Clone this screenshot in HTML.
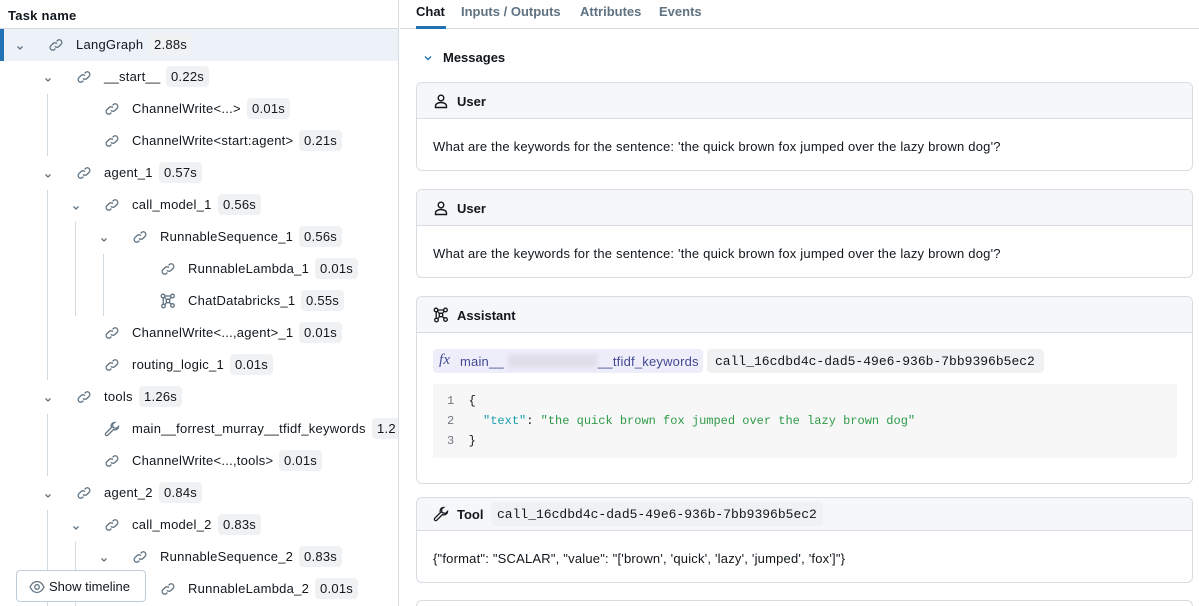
<!DOCTYPE html>
<html style="width:1199px;height:606px;overflow:hidden"><head><meta charset="utf-8"><style>
*{box-sizing:border-box;margin:0;padding:0}
body{width:1199px;height:606px;overflow:hidden;font-family:"Liberation Sans",Arial,sans-serif;font-size:13px;color:#11171c;background:#fff;position:relative}
.left{position:absolute;left:0;top:0;width:399px;height:606px;border-right:1px solid #d8dde3;overflow:hidden;letter-spacing:0.25px}
.hdr{height:29px;border-bottom:1px solid #d1d9e1;padding:8px 0 0 8px;font-weight:bold;font-size:13px}
.row{position:absolute;left:0;height:32px;width:399px;white-space:nowrap}
.row .t{position:absolute;top:8px}
.row .b{position:absolute;top:5px;background:#f0f1f3;border-radius:4px;padding:3px 5px;font-size:13px}
.chev{position:absolute;top:11px}
.ic{position:absolute;top:8px}
.vl{position:absolute;width:1px;background:#d1d9e1}
.right{position:absolute;left:400px;top:0;right:0;height:606px;overflow:hidden}
.tabs{height:29px;border-bottom:1px solid #d1d9e1;position:relative}
.tab{position:absolute;top:4px;font-weight:bold;color:#5f7281}
.card{position:absolute;left:16px;width:777px;border:1px solid #d8dde3;border-radius:6px;overflow:hidden;background:#fff}
.ch{height:36px;background:#f6f7f9;border-bottom:1px solid #d8dde3;position:relative;font-weight:bold}
.ch span{position:absolute;left:40px;top:11px}
.ch svg{position:absolute;left:16px;top:10px}
.cb{position:relative;letter-spacing:0.2px}
.mono{font-family:"Liberation Mono",monospace;letter-spacing:0}
</style></head><body>
<div class="left">
<div class="hdr">Task name</div>
<div style="position:absolute;left:0;top:29px;width:399px;height:32px;background:#edf2f9"></div>
<div style="position:absolute;left:0;top:29px;width:4px;height:32px;background:#2272b4"></div>
<div class="vl" style="left:47px;top:94px;height:62px"></div>
<div class="vl" style="left:47px;top:190px;height:190px"></div>
<div class="vl" style="left:75px;top:222px;height:94px"></div>
<div class="vl" style="left:103px;top:254px;height:62px"></div>
<div class="vl" style="left:47px;top:414px;height:62px"></div>
<div class="vl" style="left:47px;top:510px;height:96px"></div>
<div class="vl" style="left:75px;top:542px;height:64px"></div>
<div id="rows"></div>
<div style="position:absolute;left:16px;top:570px;width:130px;height:32px;border:1px solid #c0cdd8;border-radius:4px;background:#fff;letter-spacing:0">
<svg style="position:absolute;left:12px;top:9px" width="16" height="14" viewBox="0 0 16 14" fill="none" stroke="#5f7281" stroke-width="1.3"><path d="M1 7C3 3 5.5 1.5 8 1.5S13 3 15 7C13 11 10.5 12.5 8 12.5S3 11 1 7Z"/><circle cx="8" cy="7" r="2.3"/></svg>
<span style="position:absolute;left:32px;top:8px">Show timeline</span></div>
</div>
<div class="right">
<div class="tabs">
<span class="tab" style="left:16px;color:#11171c">Chat</span>
<div style="position:absolute;left:16px;top:26px;width:30px;height:3px;background:#2272b4"></div>
<span class="tab" style="left:61px">Inputs / Outputs</span>
<span class="tab" style="left:180px">Attributes</span>
<span class="tab" style="left:259px">Events</span>
</div>
<svg style="position:absolute;left:24px;top:55px" width="8" height="6" viewBox="0 0 8 6"><path d="M1 1.5L4 4.5L7 1.5" fill="none" stroke="#2272b4" stroke-width="1.4"/></svg>
<span style="position:absolute;left:43px;top:50px;font-weight:bold">Messages</span>

<div class="card" style="top:82px;height:89px"><div class="ch"><svg width="16" height="16" viewBox="0 0 16 16" fill="none" stroke="#11171c" stroke-width="1.4"><circle cx="8" cy="5" r="2.8"/><path d="M2.5 14.5V13c0-2 2.5-3.5 5.5-3.5s5.5 1.5 5.5 3.5v1.5Z"/></svg><span>User</span></div>
<div class="cb"><span style="position:absolute;left:16px;top:20px">What are the keywords for the sentence: 'the quick brown fox jumped over the lazy brown dog'?</span></div></div>

<div class="card" style="top:189px;height:89px"><div class="ch"><svg width="16" height="16" viewBox="0 0 16 16" fill="none" stroke="#11171c" stroke-width="1.4"><circle cx="8" cy="5" r="2.8"/><path d="M2.5 14.5V13c0-2 2.5-3.5 5.5-3.5s5.5 1.5 5.5 3.5v1.5Z"/></svg><span>User</span></div>
<div class="cb"><span style="position:absolute;left:16px;top:20px">What are the keywords for the sentence: 'the quick brown fox jumped over the lazy brown dog'?</span></div></div>

<div class="card" style="top:296px;height:188px"><div class="ch"><svg width="16" height="16" viewBox="0 0 16 16" fill="none" stroke="#11171c" stroke-width="1.3"><circle cx="3" cy="3" r="1.8"/><circle cx="12.5" cy="3" r="1.8"/><circle cx="3.5" cy="13" r="1.8"/><circle cx="12.5" cy="12.5" r="1.8"/><circle cx="8" cy="8" r="1.8"/><path d="M4.5 4.3L6.7 6.7M11 4.3L9.3 6.7M5 11.5L6.7 9.3M11 11.2L9.3 9.3M4.8 3H10.7M3.2 4.8V11.2"/></svg><span>Assistant</span></div>
<div class="cb">
<div style="position:absolute;left:16px;top:16px;width:270px;height:24px;background:#eeedfa;border-radius:4px;color:#434a93">
<i style="position:absolute;left:6px;top:3px;font-family:'Liberation Serif',serif;font-size:15px">fx</i>
<span style="position:absolute;left:27px;top:5px">main__</span>
<div style="position:absolute;left:75px;top:5px;width:90px;height:14px;background:#e0dfea;filter:blur(2px)"></div>
<span style="position:absolute;left:165px;top:5px">__tfidf_keywords</span></div>
<div class="mono" style="position:absolute;left:290px;top:16px;width:337px;height:24px;background:#f0f1f3;border-radius:4px;padding:5px 8px;font-size:13px">call_16cdbd4c-dad5-49e6-936b-7bb9396b5ec2</div>
<div class="mono" style="position:absolute;left:16px;top:51px;width:744px;height:74px;background:#f7f7f7;font-size:12px;line-height:20px;padding:7px 0 0 14px;white-space:pre;color:#11171c"><span style="color:#6f7780">1</span>  {
<span style="color:#6f7780">2</span>    <span style="color:#1a9fb0">"text"</span>: <span style="color:#2f9a48">"the quick brown fox jumped over the lazy brown dog"</span>
<span style="color:#6f7780">3</span>  }</div>
</div></div>

<div class="card" style="top:497px;height:86px"><div class="ch" style="height:33px"><svg width="16" height="16" viewBox="0 0 16 16" fill="none" stroke="#11171c" stroke-width="1.3" style="top:8px"><path d="M10.5 1.5a3.5 3.5 0 0 0-3 5L1.8 12.2a1.4 1.4 0 0 0 2 2L9.5 8.5a3.5 3.5 0 0 0 5-3L12.5 7.5 9 6.5 8.5 3Z"/></svg><span style="top:9px">Tool</span>
<div class="mono" style="position:absolute;left:74px;top:4px;height:24px;background:#f0f1f3;border-radius:4px;padding:5px 6px;font-weight:normal">call_16cdbd4c-dad5-49e6-936b-7bb9396b5ec2</div></div>
<div class="cb"><span style="position:absolute;left:16px;top:20px">{"format": "SCALAR", "value": "['brown', 'quick', 'lazy', 'jumped', 'fox']"}</span></div></div>

<div style="position:absolute;left:16px;top:600px;width:777px;height:6px;border:1px solid #d8dde3;border-bottom:none;border-radius:6px 6px 0 0"></div>
</div>
<script>
var rows=[[0,1,'LangGraph','2.88s'],[1,1,'__start__','0.22s'],[2,0,'ChannelWrite<...>','0.01s'],[2,0,'ChannelWrite<start:agent>','0.21s'],[1,1,'agent_1','0.57s'],[2,1,'call_model_1','0.56s'],[3,1,'RunnableSequence_1','0.56s'],[4,0,'RunnableLambda_1','0.01s'],[4,0,'ChatDatabricks_1','0.55s','ai'],[2,0,'ChannelWrite<...,agent>_1','0.01s'],[2,0,'routing_logic_1','0.01s'],[1,1,'tools','1.26s'],[2,0,'main__forrest_murray__tfidf_keywords','1.2','w'],[2,0,'ChannelWrite<...,tools>','0.01s'],[1,1,'agent_2','0.84s'],[2,1,'call_model_2','0.83s'],[3,1,'RunnableSequence_2','0.83s'],[4,0,'RunnableLambda_2','0.01s']];
var link='<svg width="16" height="16" viewBox="0 0 16 16" fill="none" stroke="#5f7281" stroke-width="1.3"><path d="M7 9.3a2.6 2.6 0 0 0 3.8.3l2.3-2.3a2.6 2.6 0 0 0-3.7-3.7L8.6 4.4"/><path d="M9 6.7a2.6 2.6 0 0 0-3.8-.3L2.9 8.7a2.6 2.6 0 0 0 3.7 3.7l.8-.8"/></svg>';
var ai='<svg width="16" height="16" viewBox="0 0 16 16" fill="none" stroke="#5f7281" stroke-width="1.3"><circle cx="3" cy="3" r="1.8"/><circle cx="12.5" cy="3" r="1.8"/><circle cx="3.5" cy="13" r="1.8"/><circle cx="12.5" cy="12.5" r="1.8"/><circle cx="8" cy="8" r="1.8"/><path d="M4.5 4.3L6.7 6.7M11 4.3L9.3 6.7M5 11.5L6.7 9.3M11 11.2L9.3 9.3M4.8 3H10.7M3.2 4.8V11.2"/></svg>';
var wr='<svg width="16" height="16" viewBox="0 0 16 16" fill="none" stroke="#5f7281" stroke-width="1.3"><path d="M10.5 1.5a3.5 3.5 0 0 0-3 5L1.8 12.2a1.4 1.4 0 0 0 2 2L9.5 8.5a3.5 3.5 0 0 0 5-3L12.5 7.5 9 6.5 8.5 3Z"/></svg>';
var chev='<svg width="10" height="8" viewBox="0 0 10 8"><path d="M2.5 2.5L5 5L7.5 2.5" fill="none" stroke="#5f7281" stroke-width="1.3"/></svg>';
var h='';rows.forEach(function(r,i){var x=r[0]*28;var top=29+i*32;var ic=r[4]=='ai'?ai:r[4]=='w'?wr:link;
h+='<div class="row" style="top:'+top+'px">'+(r[1]?'<span class="chev" style="left:'+(15+x)+'px">'+chev+'</span>':'')+'<span class="ic" style="left:'+(48+x)+'px">'+ic+'</span><span class="t" id="t'+i+'" style="left:'+(76+x)+'px"></span><span class="b" id="b'+i+'"></span></div>';});
document.getElementById('rows').innerHTML=h;
rows.forEach(function(r,i){var t=document.getElementById('t'+i);t.textContent=r[2];var b=document.getElementById('b'+i);b.textContent=r[3];b.style.left=(t.offsetLeft+t.offsetWidth+6)+'px';});
</script>
</body></html>
